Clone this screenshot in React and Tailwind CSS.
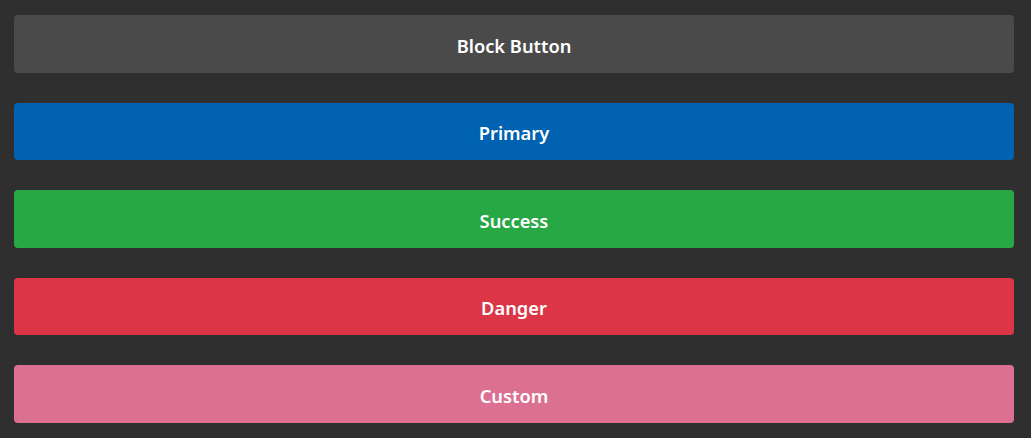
export default function App() {
  const btns = [
    { label: "Block Button", cls: "bg-[#4a4a4a]" },
    { label: "Primary", cls: "bg-[#0062b1]" },
    { label: "Success", cls: "bg-[#28a745]" },
    { label: "Danger", cls: "bg-[#dc3545]" },
    { label: "Custom", cls: "bg-[#db7093]" },
  ];
  return (
    <div className="w-[1031px] h-[438px] bg-[#2f2f2f] pt-[15px] pl-[14px] flex flex-col gap-[30px]" style={{ fontFamily: '"Noto Sans", "Open Sans", sans-serif' }}>
      {btns.map((b) => (
        <div key={b.label} className={`${b.cls} w-[1000px] h-[57.5px] rounded-[4px] flex items-center justify-center pt-[3px] text-white text-[18.3px] font-semibold`}>
          {b.label}
        </div>
      ))}
    </div>
  );
}
